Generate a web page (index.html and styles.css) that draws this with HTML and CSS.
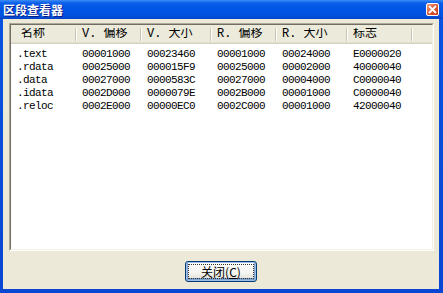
FILE: index.html
```html
<!DOCTYPE html>
<html lang="zh-CN">
<head>
    <meta charset="UTF-8">
    <title>区段查看器</title>
    <link rel="stylesheet" href="styles.css">
</head>
<body>
    <div class="window">
        <div class="titlebar">
            <span class="title">区段查看器</span>
            <span class="close-btn">
                <svg width="9" height="9" viewBox="0 0 9 9">
                    <path d="M1 1 L8 8 M8 1 L1 8" stroke="#fff" stroke-width="1.8" fill="none"/>
                </svg>
            </span>
        </div>
        <div class="client">
            <div class="list-frame">
                <div class="list">
                    <div class="row header">
                        <div class="cell">名称</div>
                        <div class="cell">V. 偏移</div>
                        <div class="cell">V. 大小</div>
                        <div class="cell">R. 偏移</div>
                        <div class="cell">R. 大小</div>
                        <div class="cell">标志</div>
                        <div class="cell filler"></div>
                    </div>
                    <div class="rows" id="rows"></div>
                </div>
            </div>
            <div class="footer">
                <button class="btn"><span class="focus">关闭(<u>C</u>)</span></button>
            </div>
        </div>
    </div>

    <script>
        const sections = [
            ['.text',  '00001000', '00023460', '00001000', '00024000', 'E0000020'],
            ['.rdata', '00025000', '000015F9', '00025000', '00002000', '40000040'],
            ['.data',  '00027000', '0000583C', '00027000', '00004000', 'C0000040'],
            ['.idata', '0002D000', '0000079E', '0002B000', '00001000', 'C0000040'],
            ['.reloc', '0002E000', '00000EC0', '0002C000', '00001000', '42000040']
        ];

        const rowsEl = document.getElementById('rows');

        // Fill the section list
        sections.forEach(sec => {
            const row = document.createElement('div');
            row.classList.add('row');
            sec.forEach(val => {
                const cell = document.createElement('div');
                cell.classList.add('cell');
                cell.textContent = val;
                row.appendChild(cell);
            });
            rowsEl.appendChild(row);
        });
    </script>
</body>
</html>
```

FILE: styles.css
```css
body {
    margin: 0;
    font-family: "Liberation Mono", "Noto Sans CJK SC", monospace;
    font-size: 12px;
    color: #000;
}

.window {
    width: 443px;
    height: 293px;
    display: flex;
    flex-direction: column;
    background: linear-gradient(to bottom, #0A53E0, #0847D2);
}

.titlebar {
    height: 19px;
    display: flex;
    align-items: center;
    justify-content: space-between;
    padding: 0 4px 0 3px;
    background: linear-gradient(to bottom, #3D8CF7 0, #0B5EEA 3px, #0055E5 50%, #0050DD 85%, #0743C6 100%);
}

.title {
    color: #fff;
    font-family: "Noto Sans CJK SC", sans-serif;
    font-weight: bold;
    font-size: 12px;
    line-height: 19px;
    text-shadow: 1px 1px 0 #0A1C8A;
}

.close-btn {
    width: 11px;
    height: 11px;
    display: flex;
    justify-content: center;
    align-items: center;
    border: 1px solid #fff;
    border-radius: 2px;
    background: linear-gradient(135deg, #F09B7D, #D9522E 60%, #C13C1E);
}

.client {
    flex: 1;
    margin: 0 4px 4px 3px;
    background: #ECE9D8;
    display: flex;
    flex-direction: column;
    padding-top: 4px;
}

.list-frame {
    margin: 0 5px 0 6px;
    height: 228px;
    box-sizing: border-box;
    border: 1px solid;
    border-color: #ACA899 #FFFFFF #FFFFFF #ACA899;
}

.list {
    height: 100%;
    box-sizing: border-box;
    background: #fff;
    border: 1px solid;
    border-color: #716F64 #F1EFE2 #F1EFE2 #716F64;
}

.row {
    display: grid;
    grid-template-columns: 65px 65px 70px 65px 71px 65px 1fr;
    height: 13px;
    line-height: 13px;
}

.row .cell {
    padding-left: 6px;
    white-space: nowrap;
    overflow: hidden;
    font-size: 11px;
    letter-spacing: -0.6px;
}

.header {
    height: 18px;
    background: #EBEADB;
    border-bottom: 1px solid #D6D2C2;
    box-shadow: inset 0 -1px 0 #E2DECD;
}

.header .cell {
    margin: 3px 0 2px;
    font-size: 12px;
    letter-spacing: 0;
    border-right: 1px solid #C7C5B2;
    box-shadow: 1px 0 0 #fff;
}

.header .cell:first-child {
    padding-left: 10px;
}

.header .filler {
    border-right: none;
    box-shadow: none;
}

.rows {
    padding-top: 4px;
}

.footer {
    display: flex;
    justify-content: center;
    padding-top: 10px;
}

.btn {
    width: 72px;
    height: 21px;
    padding: 0;
    border: 1px solid #003C74;
    border-radius: 3px;
    background: linear-gradient(to bottom, #FFFFFF, #F3F3EF 60%, #DCD8CD);
    box-shadow: inset 0 0 0 1px #9DBCE9, inset 0 -1px 0 2px #7DA2CE;
    font-family: "Noto Sans CJK SC", sans-serif;
    font-size: 12px;
    display: flex;
    align-items: stretch;
}

.btn .focus {
    flex: 1;
    margin: 2px;
    border: 1px dotted #333;
    display: flex;
    align-items: center;
    justify-content: center;
    line-height: 14px;
}
```
